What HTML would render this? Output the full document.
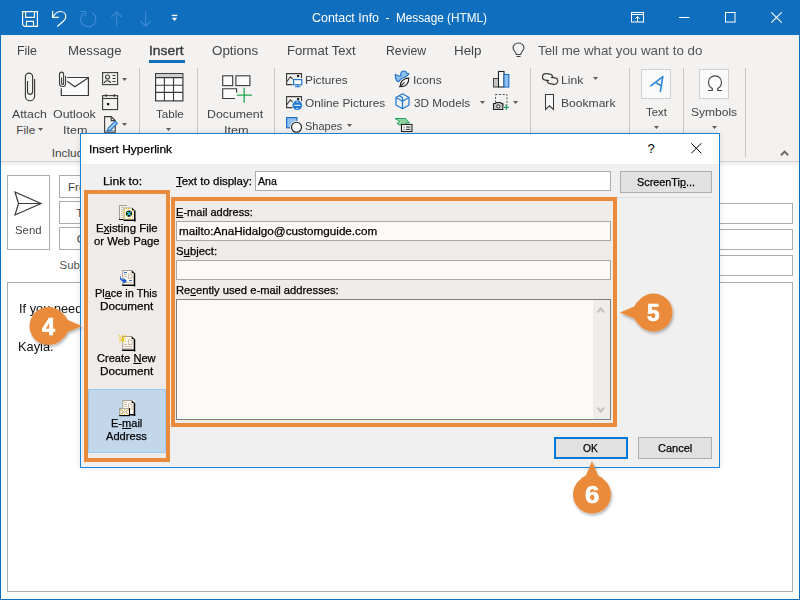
<!DOCTYPE html>
<html><head><meta charset="utf-8"><style>
html,body{margin:0;padding:0;width:800px;height:600px;overflow:hidden;background:#fff;}
body{position:relative;font-family:"Liberation Sans", sans-serif;}
.t{position:absolute;white-space:pre;line-height:normal;}
.k{-webkit-text-stroke:0.25px #000;}
u{text-decoration:underline;text-underline-offset:1px;}
</style></head><body>
<div style="position:absolute;left:0px;top:0px;width:800px;height:600px;box-sizing:border-box;background:#fff;"></div>
<div style="position:absolute;left:0px;top:0px;width:800px;height:35px;box-sizing:border-box;background:#106ebe;"></div>
<div style="position:absolute;left:1px;top:35px;width:798px;height:126px;box-sizing:border-box;background:#f3f2f1;"></div>
<div style="position:absolute;left:1px;top:161px;width:798px;height:1px;box-sizing:border-box;background:#d6d4d2;"></div>
<div style="position:absolute;left:1px;top:162px;width:798px;height:5px;background:linear-gradient(#ecebea,#fff);"></div>
<div style="position:absolute;left:0px;top:0px;width:1px;height:600px;box-sizing:border-box;background:#106ebe;"></div>
<div style="position:absolute;left:799px;top:0px;width:1px;height:600px;box-sizing:border-box;background:#106ebe;"></div>
<div style="position:absolute;left:0px;top:599px;width:800px;height:1px;box-sizing:border-box;background:#106ebe;"></div>
<svg style="position:absolute;left:22px;top:11px;overflow:visible;" width="16" height="16" viewBox="0 0 16 16"><g fill="none" stroke="#fff" stroke-width="1.15"><path d="M0.6,0.6H15.4V15.4H2.4L0.6,13.6Z"/><path d="M3.6,0.6V6.3H12.4V0.6"/><path d="M4.5,15.4V10.4H11.5V15.4"/></g></svg>
<svg style="position:absolute;left:51px;top:10px;overflow:visible;" width="16" height="18" viewBox="0 0 16 18"><g fill="none" stroke="#fff" stroke-width="1.2"><path d="M1.6,1.1V7.3H7.8"/><path d="M1.8,7C4,3.5 6.5,1.5 9.5,1.5C12.5,1.5 14.8,3.5 14.8,6.5C14.8,8.5 13.8,9.8 12.5,11L6.3,16.5"/></g></svg>
<svg style="position:absolute;left:76px;top:8px;overflow:visible;" width="24" height="22" viewBox="0 0 24 22"><g fill="none" stroke="#3f8ad6" stroke-width="1.2"><path d="M16.3,4.8A7.6,7.6 0 1 1 7.6,5.2"/><path d="M4,3.5H9.5V8.6"/></g></svg>
<svg style="position:absolute;left:111px;top:11px;overflow:visible;" width="12" height="16" viewBox="0 0 12 16"><g fill="none" stroke="#3f8ad6" stroke-width="1.1"><path d="M5.6,0.5V15.8"/><path d="M0.4,6L5.6,0.8L10.8,6"/></g></svg>
<svg style="position:absolute;left:140px;top:11px;overflow:visible;" width="12" height="16" viewBox="0 0 12 16"><g fill="none" stroke="#3f8ad6" stroke-width="1.1"><path d="M5.6,0V15.2"/><path d="M0.4,10L5.6,15.2L10.8,10"/></g></svg>
<svg style="position:absolute;left:171px;top:14px;overflow:visible;" width="8" height="8" viewBox="0 0 8 8"><rect x="0.8" y="0.8" width="5.4" height="1.3" fill="#fff"/><path d="M0.8,3.8H6.2L3.5,7Z" fill="#fff"/></svg>
<div class="t" style="left:312.41px;top:11.00px;font-size:12.6px;color:#fff;font-weight:normal;transform:scaleX(0.9865);transform-origin:0 0;">Contact Info</div>
<div style="position:absolute;left:385.6px;top:18px;width:3.7px;height:1.1px;box-sizing:border-box;background:#fff;"></div>
<div class="t" style="left:395.82px;top:11.00px;font-size:12.6px;color:#fff;font-weight:normal;transform:scaleX(0.9346);transform-origin:0 0;">Message (HTML)</div>
<svg style="position:absolute;left:630px;top:11px;overflow:visible;" width="15" height="12" viewBox="0 0 15 12"><g fill="none" stroke="#fff" stroke-width="1"><rect x="1.5" y="1.5" width="12" height="9.5"/><path d="M1.5,3.5H13.5"/><path d="M7.5,11V5.5M5.3,7.7L7.5,5.5L9.7,7.7"/></g></svg>
<svg style="position:absolute;left:679px;top:16px;overflow:visible;" width="11" height="3" viewBox="0 0 11 3"><path d="M0,1.5H10.5" stroke="#fff" stroke-width="1"/></svg>
<svg style="position:absolute;left:725px;top:12px;overflow:visible;" width="11" height="11" viewBox="0 0 11 11"><rect x="0.5" y="0.5" width="9.5" height="9.5" fill="none" stroke="#fff" stroke-width="1"/></svg>
<svg style="position:absolute;left:771px;top:12px;overflow:visible;" width="11" height="11" viewBox="0 0 11 11"><path d="M0.3,0.3L10.7,10.7M10.7,0.3L0.3,10.7" stroke="#fff" stroke-width="1.1"/></svg>
<div class="t" style="left:17.39px;top:44.00px;font-size:12.3px;color:#444444;font-weight:normal;transform:scaleX(1.0055);transform-origin:0 0;">File</div>
<div class="t" style="left:68.43px;top:44.00px;font-size:12.3px;color:#444444;font-weight:normal;transform:scaleX(1.0723);transform-origin:0 0;">Message</div>
<div class="t" style="left:148.67px;top:44.00px;font-size:12.4px;color:#3a3a3a;font-weight:normal;transform:scaleX(1.1174);transform-origin:0 0;-webkit-text-stroke:0.35px #3a3a3a;">Insert</div>
<div style="position:absolute;left:149px;top:60px;width:36px;height:3px;box-sizing:border-box;background:#106ebe;"></div>
<div class="t" style="left:211.85px;top:44.00px;font-size:12.3px;color:#444444;font-weight:normal;transform:scaleX(1.0894);transform-origin:0 0;">Options</div>
<div class="t" style="left:287.24px;top:44.00px;font-size:12.3px;color:#444444;font-weight:normal;transform:scaleX(1.0597);transform-origin:0 0;">Format Text</div>
<div class="t" style="left:386.30px;top:44.00px;font-size:12.3px;color:#444444;font-weight:normal;transform:scaleX(0.9975);transform-origin:0 0;">Review</div>
<div class="t" style="left:454.42px;top:44.00px;font-size:12.3px;color:#444444;font-weight:normal;transform:scaleX(1.0840);transform-origin:0 0;">Help</div>
<svg style="position:absolute;left:512px;top:43px;overflow:visible;" width="14" height="16" viewBox="0 0 14 16"><g fill="none" stroke="#444444" stroke-width="1.1"><path d="M4.3,11.5C4.3,9 1,7.5 1,5A5.5,5 0 0 1 12,5C12,7.5 8.7,9 8.7,11.5Z"/><path d="M4.5,13.5H8.5"/></g></svg>
<div class="t" style="left:538.18px;top:44.00px;font-size:12.4px;color:#555;font-weight:normal;transform:scaleX(1.0749);transform-origin:0 0;">Tell me what you want to do</div>
<div style="position:absolute;left:139px;top:68px;width:1px;height:89px;box-sizing:border-box;background:#c8c6c4;"></div>
<div style="position:absolute;left:197px;top:68px;width:1px;height:89px;box-sizing:border-box;background:#c8c6c4;"></div>
<div style="position:absolute;left:274px;top:68px;width:1px;height:89px;box-sizing:border-box;background:#c8c6c4;"></div>
<div style="position:absolute;left:530px;top:68px;width:1px;height:89px;box-sizing:border-box;background:#c8c6c4;"></div>
<div style="position:absolute;left:629px;top:68px;width:1px;height:89px;box-sizing:border-box;background:#c8c6c4;"></div>
<div style="position:absolute;left:683px;top:68px;width:1px;height:89px;box-sizing:border-box;background:#c8c6c4;"></div>
<div style="position:absolute;left:745px;top:68px;width:1px;height:89px;box-sizing:border-box;background:#c8c6c4;"></div>
<svg style="position:absolute;left:20px;top:68px;overflow:visible;" width="20" height="36" viewBox="0 0 20 36"><path d="M7.5,13V23.8A2.55,2.55 0 0 0 12.6,23.8V8.7A3.6,3.6 0 0 0 5.4,8.7V28.2A4.6,4.6 0 0 0 14.6,28.2V11.1" fill="none" stroke="#3b3a39" stroke-width="1.15"/></svg>

<div class="t" style="left:12.40px;top:107.00px;font-size:11.8px;color:#444444;font-weight:normal;transform:scaleX(1.0428);transform-origin:0 0;">Attach</div>
<div class="t" style="left:16.30px;top:123.00px;font-size:11.8px;color:#444444;font-weight:normal;transform:scaleX(1.0000);transform-origin:0 0;">File</div>
<svg style="position:absolute;left:38px;top:128px;overflow:visible;" width="6" height="4" viewBox="0 0 6 4"><path d="M0,0H5L2.5,3Z" fill="#605e5c"/></svg>
<svg style="position:absolute;left:56px;top:68px;overflow:visible;" width="36" height="32" viewBox="0 0 36 32"><rect x="5.3" y="9.5" width="27.1" height="18" fill="#fafafa"/><g fill="none" stroke="#3b3a39" stroke-width="1.2"><path d="M11.2,9.5H32.4V27.5H5.3V20.3"/><path d="M11.2,13.3L18.9,18.7L32,10"/><path d="M5.6,9.6V15.4A1,1 0 0 0 7.6,15.4V6.2A2.05,2.05 0 0 0 3.5,6.2V15.5A3.05,3.05 0 0 0 9.6,15.5V8" stroke-width="1.1"/></g></svg>
<div class="t" style="left:52.87px;top:107.00px;font-size:11.8px;color:#444444;font-weight:normal;transform:scaleX(1.0536);transform-origin:0 0;">Outlook</div>
<div class="t" style="left:62.58px;top:123.00px;font-size:11.8px;color:#444444;font-weight:normal;transform:scaleX(1.0664);transform-origin:0 0;">Item</div>
<svg style="position:absolute;left:102px;top:72px;overflow:visible;" width="17" height="14" viewBox="0 0 17 14"><g fill="none" stroke="#3b3a39" stroke-width="1.1"><rect x="0.6" y="0.6" width="15" height="12"/><circle cx="5.5" cy="5" r="2"/><path d="M2.3,11C2.8,8 8.2,8 8.7,11"/><path d="M10.5,3.5H13.5M10.5,6.5H13.5M10.5,9.5H13.5"/></g></svg>
<svg style="position:absolute;left:122px;top:78px;overflow:visible;" width="6" height="4" viewBox="0 0 6 4"><path d="M0,0H5L2.5,3Z" fill="#605e5c"/></svg>
<svg style="position:absolute;left:102px;top:94px;overflow:visible;" width="17" height="17" viewBox="0 0 17 17"><g fill="none" stroke="#3b3a39" stroke-width="1.1"><rect x="0.6" y="1.6" width="15" height="14"/><path d="M0.6,4.5H15.6"/><path d="M4,0V3M12.3,0V3"/></g><rect x="5" y="9" width="2.2" height="2.2" fill="#111"/></svg>
<svg style="position:absolute;left:103px;top:116px;overflow:visible;" width="17" height="17" viewBox="0 0 17 17"><g fill="none" stroke="#3b3a39" stroke-width="1.1"><path d="M1.6,0.6H8.2L12.2,4.6V16.2H1.6Z"/><path d="M8.2,0.6V4.6H12.2"/></g><path d="M5.2,12.2L12.2,5.2L14.3,7.3L7.3,14.3L4.6,14.9Z" fill="#a9d0f5" stroke="#1f6fc0" stroke-width="1.1" stroke-linejoin="round"/><path d="M3,14.8H10.5" stroke="#2b79c8" stroke-width="1"/></svg>
<svg style="position:absolute;left:122px;top:123px;overflow:visible;" width="6" height="4" viewBox="0 0 6 4"><path d="M0,0H5L2.5,3Z" fill="#605e5c"/></svg>
<div class="t" style="left:51.75px;top:146.00px;font-size:11.8px;color:#444444;font-weight:normal;">Include</div>
<svg style="position:absolute;left:152px;top:70px;overflow:visible;" width="36" height="34" viewBox="0 0 36 34"><rect x="3.6" y="3.6" width="27.3" height="27.3" fill="#fdfdfd" stroke="#3b3a39" stroke-width="1.2"/><rect x="4.2" y="4.2" width="26.1" height="3.4" fill="#cfcdcb"/><g stroke="#3b3a39" stroke-width="1.1"><path d="M3.6,7.6H30.9M3.6,15.3H30.9M3.6,22.4H30.9M12.4,7.6V30.9M21.5,7.6V30.9"/></g></svg>
<div class="t" style="left:155.70px;top:107.00px;font-size:11.8px;color:#444444;font-weight:normal;transform:scaleX(0.9854);transform-origin:0 0;">Table</div>
<svg style="position:absolute;left:166px;top:128px;overflow:visible;" width="6" height="4" viewBox="0 0 6 4"><path d="M0,0H5L2.5,3Z" fill="#605e5c"/></svg>
<svg style="position:absolute;left:218px;top:70px;overflow:visible;" width="38" height="36" viewBox="0 0 38 36"><g fill="#fafafa" stroke="#3b3a39" stroke-width="1.1"><rect x="4.7" y="5.8" width="10" height="9.8"/><rect x="17.9" y="5.8" width="14" height="9.8"/><path d="M18.6,22.8V18.8H4.7V28.5H17.1"/></g><path d="M26.2,17.7V32.7M18.9,25.2H33.9" stroke="#22a34d" stroke-width="1.3"/></svg>
<div class="t" style="left:207.46px;top:107.00px;font-size:11.8px;color:#444444;font-weight:normal;transform:scaleX(1.0436);transform-origin:0 0;">Document</div>
<div class="t" style="left:223.52px;top:123.00px;font-size:11.8px;color:#444444;font-weight:normal;transform:scaleX(1.0758);transform-origin:0 0;">Item</div>
<svg style="position:absolute;left:283px;top:70px;overflow:visible;" width="22" height="20" viewBox="0 0 22 20"><g fill="none" stroke="#3b3a39" stroke-width="1.1"><path d="M18.5,8V3.6H3.6V14.6H9.5"/><path d="M4,11.5L7.3,6.8L9.6,9"/></g><rect x="14" y="5" width="2.2" height="2.2" fill="#222"/><rect x="10.6" y="9.6" width="8.2" height="5.2" fill="#fff" stroke="#1f78d1" stroke-width="1.2"/><path d="M14.7,14.8V16.6M12,16.8H17.4" stroke="#1f78d1" stroke-width="1.1"/></svg>
<div class="t" style="left:304.60px;top:73.00px;font-size:11.8px;color:#444444;font-weight:normal;transform:scaleX(1.0024);transform-origin:0 0;">Pictures</div>
<svg style="position:absolute;left:283px;top:93px;overflow:visible;" width="22" height="20" viewBox="0 0 22 20"><g fill="none" stroke="#3b3a39" stroke-width="1.1"><path d="M18.5,8V3.6H3.6V14.6H9.5"/><path d="M4,11.5L7.3,6.8L9.6,9"/></g><rect x="14" y="5" width="2.2" height="2.2" fill="#222"/><circle cx="14.3" cy="12.3" r="4.8" fill="#1f78d1"/><path d="M11.2,12.3H17.4" stroke="#fff" stroke-width="1"/><path d="M13.3,9.6L14.3,8.6L15.3,9.6M13.3,15L14.3,16L15.3,15" fill="none" stroke="#fff" stroke-width="0.9"/></svg>
<div class="t" style="left:305.00px;top:96.00px;font-size:11.8px;color:#444444;font-weight:normal;transform:scaleX(1.0025);transform-origin:0 0;">Online Pictures</div>
<svg style="position:absolute;left:285px;top:116px;overflow:visible;" width="18" height="18" viewBox="0 0 18 18"><rect x="1.6" y="1.6" width="10.2" height="10.2" fill="#8fc0ef" stroke="#1f6fc0" stroke-width="1.2"/><circle cx="11.5" cy="11.2" r="6.4" fill="#f3f2f1"/><circle cx="11.5" cy="11.2" r="5" fill="#fafafa" stroke="#222" stroke-width="1.15"/></svg>
<div class="t" style="left:305.04px;top:119.00px;font-size:11.8px;color:#444444;font-weight:normal;transform:scaleX(0.9308);transform-origin:0 0;">Shapes</div>
<svg style="position:absolute;left:347px;top:124px;overflow:visible;" width="6" height="4" viewBox="0 0 6 4"><path d="M0,0H5L2.5,3Z" fill="#605e5c"/></svg>
<svg style="position:absolute;left:392px;top:68px;overflow:visible;" width="22" height="22" viewBox="0 0 22 22"><path d="M3.3,6.4C4.5,7.6 6.3,8.1 8.8,7.9C8.3,5 9.6,3 11.6,3C13,3 14.3,3.9 15,5.2L16.9,5.6L15.5,7.4C14.6,8.5 13.5,9.1 12.3,9.3C9.5,10.2 7.8,12 6.6,13.6C4.3,13 3.2,10.8 3.3,6.4Z" fill="#8fc0ef" stroke="#1f6fc0" stroke-width="1.1" stroke-linejoin="round"/><path d="M8.2,18.3C8,13.8 11.2,10.2 16.8,10.1C17,15.5 13.8,18.6 9.5,18.6Z" fill="#f7f7f7" stroke="#222" stroke-width="1.1"/><path d="M7.2,19.2L12.5,14.3" stroke="#222" stroke-width="1.1"/></svg>
<div class="t" style="left:413.28px;top:73.00px;font-size:11.8px;color:#444444;font-weight:normal;transform:scaleX(1.0187);transform-origin:0 0;">Icons</div>
<svg style="position:absolute;left:394px;top:92px;overflow:visible;" width="17" height="19" viewBox="0 0 17 19"><g fill="none" stroke="#1f78d1" stroke-width="1.25" stroke-linejoin="round"><path d="M8.5,1.8L15,5.5V13L8.5,16.8L2,13V5.5Z"/><path d="M2,5.5L8.5,9.2L15,5.5M8.5,9.2V16.8M5.2,3.7L8.5,5.6V9"/></g></svg>
<div class="t" style="left:413.90px;top:96.00px;font-size:11.8px;color:#444444;font-weight:normal;transform:scaleX(0.9964);transform-origin:0 0;">3D Models</div>
<svg style="position:absolute;left:480px;top:101px;overflow:visible;" width="6" height="4" viewBox="0 0 6 4"><path d="M0,0H5L2.5,3Z" fill="#605e5c"/></svg>
<svg style="position:absolute;left:394px;top:116px;overflow:visible;" width="19" height="17" viewBox="0 0 19 17"><path d="M1,2.5H11.5L15.5,7H12V9H5.5L3,7.5L5.8,5.5Z" fill="#8fd19e" stroke="#21a366" stroke-width="1"/><rect x="7.5" y="8.5" width="10.5" height="7" fill="#fff" stroke="#222" stroke-width="1.1"/><path d="M9.5,11H10.5M12,11H16.5M9.5,13.3H10.5M12,13.3H16.5" stroke="#222" stroke-width="1"/></svg>
<svg style="position:absolute;left:492px;top:70px;overflow:visible;" width="19" height="19" viewBox="0 0 19 19"><rect x="1.5" y="8.5" width="5" height="8.5" fill="#c8c6c4" stroke="#444" stroke-width="1"/><rect x="6.5" y="1.5" width="5.5" height="15.5" fill="#fff" stroke="#222" stroke-width="1.1"/><rect x="12" y="4.5" width="4.8" height="12.5" fill="#8fc0ef" stroke="#1f6fc0" stroke-width="1.1"/></svg>
<svg style="position:absolute;left:492px;top:92px;overflow:visible;" width="19" height="20" viewBox="0 0 19 20"><rect x="3.5" y="2.5" width="11.5" height="10.5" fill="none" stroke="#555" stroke-width="1" stroke-dasharray="2,1.6"/><path d="M1.5,11.5H3.5L4.5,10.5H8.5L9.5,11.5H10.8V17.5H1.5Z" fill="#c8c6c4" stroke="#222" stroke-width="1.1"/><circle cx="6.2" cy="14.4" r="1.6" fill="#fff" stroke="#222" stroke-width="1"/><path d="M14.4,12.8V18M11.8,15.4H17" stroke="#21a366" stroke-width="1.3"/></svg>
<svg style="position:absolute;left:513px;top:101px;overflow:visible;" width="6" height="4" viewBox="0 0 6 4"><path d="M0,0H5.2L2.6,3Z" fill="#605e5c"/></svg>
<svg style="position:absolute;left:540px;top:72px;overflow:visible;" width="20" height="14" viewBox="0 0 20 14"><g fill="none" stroke="#3b3a39" stroke-width="1.2" transform="rotate(8 10 7)"><path d="M9.3,8.7H5.45A3.25,3.25 0 0 1 5.45,2.2H9.25A3.25,3.25 0 0 1 12.5,5.45"/><path d="M10.7,5.2H14.65A3.25,3.25 0 0 1 14.65,11.7H10.45A3.25,3.25 0 0 1 7.2,8.45"/></g></svg>
<div class="t" style="left:560.57px;top:73.00px;font-size:11.8px;color:#444444;font-weight:normal;transform:scaleX(1.0291);transform-origin:0 0;">Link</div>
<svg style="position:absolute;left:593px;top:77px;overflow:visible;" width="6" height="4" viewBox="0 0 6 4"><path d="M0,0H5L2.5,3Z" fill="#605e5c"/></svg>
<svg style="position:absolute;left:544px;top:93px;overflow:visible;" width="12" height="18" viewBox="0 0 12 18"><path d="M1.5,1.5H9.5V16.5L5.5,12.8L1.5,16.5Z" fill="#f7f7f7" stroke="#3b3a39" stroke-width="1.05"/></svg>
<div class="t" style="left:560.58px;top:96.00px;font-size:11.8px;color:#444444;font-weight:normal;transform:scaleX(1.0250);transform-origin:0 0;">Bookmark</div>
<div style="position:absolute;left:641px;top:69px;width:30px;height:30px;box-sizing:border-box;background:#fafafa;border:1px solid #d2d0ce;"></div>
<svg style="position:absolute;left:646px;top:72px;overflow:visible;" width="22" height="22" viewBox="0 0 22 22"><path d="M4.8,13.8L16.8,4.6L14.4,19.4M9.6,10.6L15.4,13.8" fill="none" stroke="#2e86d9" stroke-width="1.6" stroke-linecap="round" stroke-linejoin="round"/></svg>
<div class="t" style="left:645.96px;top:105.00px;font-size:11.8px;color:#444444;font-weight:normal;transform:scaleX(0.9695);transform-origin:0 0;">Text</div>
<svg style="position:absolute;left:654px;top:126px;overflow:visible;" width="6" height="4" viewBox="0 0 6 4"><path d="M0,0H5L2.5,3Z" fill="#605e5c"/></svg>
<div style="position:absolute;left:699px;top:69px;width:30px;height:30px;box-sizing:border-box;background:#fafafa;border:1px solid #d2d0ce;"></div>
<svg style="position:absolute;left:706px;top:74px;overflow:visible;" width="18" height="18" viewBox="0 0 18 18"><path d="M2,16.5H6.3V14.6C3.8,13.3 2.5,11 2.5,8.3C2.5,4.6 5.3,1.9 9,1.9C12.7,1.9 15.5,4.6 15.5,8.3C15.5,11 14.2,13.3 11.7,14.6V16.5H16" fill="none" stroke="#444" stroke-width="1.15"/></svg>
<div class="t" style="left:691.39px;top:105.00px;font-size:11.8px;color:#444444;font-weight:normal;transform:scaleX(1.0181);transform-origin:0 0;">Symbols</div>
<svg style="position:absolute;left:712px;top:126px;overflow:visible;" width="6" height="4" viewBox="0 0 6 4"><path d="M0,0H5L2.5,3Z" fill="#605e5c"/></svg>
<svg style="position:absolute;left:780px;top:149px;overflow:visible;" width="10" height="8" viewBox="0 0 10 8"><path d="M1,6.2L4.6,2.6L8.2,6.2" fill="none" stroke="#6a6866" stroke-width="2"/></svg>
<div style="position:absolute;left:7px;top:175px;width:43px;height:75px;box-sizing:border-box;border:1px solid #ababab;background:#fff;"></div>
<svg style="position:absolute;left:14px;top:191px;overflow:visible;" width="29" height="25" viewBox="0 0 29 25"><path d="M1,1L27,12.5L1,24L4.5,12.5Z M4.5,12.5H27" fill="none" stroke="#3b3a39" stroke-width="1.2" stroke-linejoin="miter"/></svg>
<div class="t" style="left:14.90px;top:224.00px;font-size:11.4px;color:#444444;font-weight:normal;transform:scaleX(0.9961);transform-origin:0 0;">Send</div>
<div style="position:absolute;left:59px;top:175px;width:60px;height:23px;box-sizing:border-box;border:1px solid #ababab;background:#fff;"></div>
<div style="position:absolute;left:59px;top:201px;width:60px;height:23px;box-sizing:border-box;border:1px solid #ababab;background:#fff;"></div>
<div style="position:absolute;left:59px;top:227px;width:60px;height:23px;box-sizing:border-box;border:1px solid #ababab;background:#fff;"></div>
<div class="t" style="left:68.00px;top:180.00px;font-size:11.6px;color:#444;font-weight:normal;">From</div>
<div class="t" style="left:76.30px;top:206.00px;font-size:11.6px;color:#444;font-weight:normal;">To</div>
<div class="t" style="left:76.70px;top:232.00px;font-size:11.6px;color:#444;font-weight:normal;">Cc</div>
<div style="position:absolute;left:125px;top:203px;width:668px;height:21px;box-sizing:border-box;border:1px solid #ababab;background:#fff;"></div>
<div style="position:absolute;left:125px;top:229px;width:668px;height:21px;box-sizing:border-box;border:1px solid #ababab;background:#fff;"></div>
<div style="position:absolute;left:125px;top:255px;width:668px;height:21px;box-sizing:border-box;border:1px solid #ababab;background:#fff;"></div>
<div class="t" style="left:59.60px;top:259.00px;font-size:11.4px;color:#555;font-weight:normal;">Subject</div>
<div style="position:absolute;left:7px;top:282px;width:786px;height:310px;box-sizing:border-box;border:1px solid #ababab;background:#fff;"></div>
<div class="t" style="left:18.90px;top:302.00px;font-size:11.9px;color:#111;font-weight:normal;transform:scaleX(1.077);transform-origin:0 0;">If you need any more information</div>
<div class="t" style="left:17.82px;top:340.00px;font-size:11.9px;color:#111;font-weight:normal;transform:scaleX(1.0774);transform-origin:0 0;">Kayla.</div>
<div style="position:absolute;left:80px;top:133px;width:640px;height:335px;box-shadow:0 0 6px rgba(0,0,0,0.12);"></div>
<div style="position:absolute;left:80px;top:133px;width:640px;height:335px;box-sizing:border-box;border:1px solid #1883d7;background:#f0f0f0;"></div>
<div style="position:absolute;left:81px;top:134px;width:638px;height:30px;box-sizing:border-box;background:#fff;"></div>
<div class="t k" style="left:88.87px;top:142.00px;font-size:11.6px;color:#000;font-weight:normal;transform:scaleX(1.0314);transform-origin:0 0;">Insert Hyperlink</div>
<div class="t" style="left:451.00px;width:400px;text-align:center;top:141.00px;font-size:13px;color:#000;font-weight:normal;">?</div>
<svg style="position:absolute;left:691px;top:143px;overflow:visible;" width="11" height="11" viewBox="0 0 11 11"><path d="M0.3,0.3L10.3,10.3M10.3,0.3L0.3,10.3" stroke="#000" stroke-width="1"/></svg>
<div class="t k" style="left:102.53px;top:175.00px;font-size:11.2px;color:#000;font-weight:normal;transform:scaleX(1.0819);transform-origin:0 0;">Link to:</div>
<div class="t k" style="left:176.00px;top:175.00px;font-size:11.2px;color:#000;font-weight:normal;transform:scaleX(1.0260);transform-origin:0 0;"><u>T</u>ext to display:</div>
<div style="position:absolute;left:255px;top:171px;width:356px;height:20px;box-sizing:border-box;border:1px solid #adadad;background:#fff;"></div>
<div class="t k" style="left:258.41px;top:175.00px;font-size:11.2px;color:#000;font-weight:normal;transform:scaleX(0.9444);transform-origin:0 0;">Ana</div>
<div style="position:absolute;left:620px;top:171px;width:92px;height:22px;box-sizing:border-box;border:1px solid #adadad;background:#e1e1e1;"></div>
<div class="t k" style="left:637.02px;top:176.00px;font-size:11.2px;color:#000;font-weight:normal;transform:scaleX(0.9675);transform-origin:0 0;">ScreenTi<u>p</u>...</div>
<div style="position:absolute;left:175px;top:197px;width:538px;height:1px;box-sizing:border-box;background:#dcdcdc;"></div>
<div style="position:absolute;left:84px;top:190px;width:86px;height:272px;box-sizing:border-box;border:4px solid #e98b3a;background:#efebe8;"></div>
<div style="position:absolute;left:88px;top:389px;width:78px;height:64px;box-sizing:border-box;border:1px solid #99c9f5;background:#c3d7eb;"></div>
<svg style="position:absolute;left:112px;top:200px;overflow:visible;" width="30" height="24" viewBox="0 0 30 24"><rect x="7" y="5" width="9" height="14.5" fill="#f7f3ec"/><rect x="7" y="5" width="8" height="1" fill="#a59f96"/><rect x="7" y="5" width="1" height="14.5" fill="#a59f96"/><rect x="7" y="19" width="5" height="1" fill="#000"/><rect x="9" y="7" width="2" height="1" fill="#cfc3b0"/><rect x="9" y="9" width="2" height="1" fill="#cfc3b0"/><rect x="9" y="11" width="2" height="1" fill="#cfc3b0"/><rect x="9" y="13" width="2" height="1" fill="#cfc3b0"/><rect x="9" y="15" width="2" height="1" fill="#cfc3b0"/><rect x="9" y="17" width="2" height="1" fill="#cfc3b0"/><rect x="11.5" y="7.5" width="11.5" height="13" fill="#fcf8f2"/><rect x="11.5" y="7.5" width="8.5" height="1" fill="#a59f96"/><rect x="11.5" y="7.5" width="1" height="13" fill="#a59f96"/><rect x="22.0" y="10.5" width="1.5" height="11" fill="#000"/><rect x="11.5" y="19.5" width="12.0" height="1.5" fill="#000"/><path d="M20.0,7.5 L23.0,10.5 H20.0 Z" fill="#111"/><circle cx="12.5" cy="8.6" r="0.55" fill="#f5c400"/><circle cx="14.5" cy="8.6" r="0.55" fill="#f5c400"/><circle cx="16.5" cy="8.6" r="0.55" fill="#f5c400"/><circle cx="18.5" cy="8.6" r="0.55" fill="#f5c400"/><circle cx="12.5" cy="18.8" r="0.55" fill="#f5c400"/><circle cx="14.5" cy="18.8" r="0.55" fill="#f5c400"/><circle cx="16.5" cy="18.8" r="0.55" fill="#f5c400"/><circle cx="18.5" cy="18.8" r="0.55" fill="#f5c400"/><circle cx="20.5" cy="18.8" r="0.55" fill="#f5c400"/><circle cx="12.5" cy="10.6" r="0.55" fill="#f5c400"/><circle cx="20.5" cy="10.6" r="0.55" fill="#f5c400"/><circle cx="12.5" cy="12.6" r="0.55" fill="#f5c400"/><circle cx="20.5" cy="12.6" r="0.55" fill="#f5c400"/><circle cx="12.5" cy="14.6" r="0.55" fill="#f5c400"/><circle cx="20.5" cy="14.6" r="0.55" fill="#f5c400"/><circle cx="12.5" cy="16.6" r="0.55" fill="#f5c400"/><circle cx="20.5" cy="16.6" r="0.55" fill="#f5c400"/><circle cx="17" cy="13.6" r="3.1" fill="#050505"/><path d="M15,12L19,15.5M19,11.6L15.3,15.3" stroke="#29d0e8" stroke-width="1.1"/><circle cx="16.4" cy="12.2" r="0.7" fill="#22c33a"/><circle cx="15.4" cy="15.4" r="0.7" fill="#22c33a"/></svg>
<svg style="position:absolute;left:112px;top:265px;overflow:visible;" width="30" height="24" viewBox="0 0 30 24"><rect x="10.2" y="5" width="12.5" height="15.5" fill="#fcf8f2"/><rect x="10.2" y="5" width="9.5" height="1" fill="#a59f96"/><rect x="10.2" y="5" width="1" height="15.5" fill="#a59f96"/><rect x="21.7" y="8" width="1.5" height="13.5" fill="#000"/><rect x="10.2" y="19.5" width="13.0" height="1.5" fill="#000"/><path d="M19.7,5 L22.7,8 H19.7 Z" fill="#111"/><rect x="12" y="7" width="3" height="1" fill="#2f6fe0"/><rect x="12" y="9" width="3" height="1" fill="#cdbfa8"/><rect x="12" y="11" width="3" height="1" fill="#cdbfa8"/><rect x="16.5" y="9" width="3.5" height="4.5" fill="none" stroke="#cdbfa8" stroke-width="1"/><rect x="17" y="15" width="3" height="1" fill="#2f6fe0"/><rect x="13" y="17" width="7" height="1" fill="#cdbfa8"/><path d="M9.5,9 C8,9.5 8,12.5 10,14 L11.5,15 L11.5,13 L15,16 L11.5,19 L11.5,17 L9,15.3 C7.5,14 7.5,10.5 9.5,9 Z" fill="#1757d0"/></svg>
<svg style="position:absolute;left:112px;top:330px;overflow:visible;" width="30" height="24" viewBox="0 0 30 24"><rect x="10.2" y="6" width="12.5" height="14.5" fill="#fcf8f2"/><rect x="10.2" y="6" width="9.5" height="1" fill="#a59f96"/><rect x="10.2" y="6" width="1" height="14.5" fill="#a59f96"/><rect x="21.7" y="9" width="1.5" height="12.5" fill="#000"/><rect x="10.2" y="19.5" width="13.0" height="1.5" fill="#000"/><path d="M19.7,6 L22.7,9 H19.7 Z" fill="#111"/><rect x="16.5" y="10" width="3.5" height="4.5" fill="none" stroke="#cdbfa8" stroke-width="1"/><rect x="12" y="14" width="3" height="1" fill="#cdbfa8"/><rect x="12" y="16" width="8" height="1" fill="#cdbfa8"/><rect x="12" y="18" width="8" height="1" fill="#cdbfa8"/><path d="M10.5,5V13M7,5.5L14,12.5M14,5.5L7,12.5M6.8,9H14.5" stroke="#f2c400" stroke-width="1.1" stroke-dasharray="1.2,0.8"/></svg>
<svg style="position:absolute;left:112px;top:395px;overflow:visible;" width="30" height="24" viewBox="0 0 30 24"><rect x="10.2" y="5" width="12.5" height="15" fill="#fcf8f2"/><rect x="10.2" y="5" width="9.5" height="1" fill="#a59f96"/><rect x="10.2" y="5" width="1" height="15" fill="#a59f96"/><rect x="21.7" y="8" width="1.5" height="13" fill="#000"/><rect x="10.2" y="19" width="13.0" height="1.5" fill="#000"/><path d="M19.7,5 L22.7,8 H19.7 Z" fill="#111"/><rect x="12" y="7" width="3" height="1" fill="#cdbfa8"/><rect x="12" y="9" width="3" height="1" fill="#cdbfa8"/><rect x="12" y="11" width="3" height="1" fill="#cdbfa8"/><rect x="16.5" y="9" width="3.5" height="5" fill="none" stroke="#cdbfa8" stroke-width="1"/><rect x="7.2" y="13.2" width="10.5" height="7.5" fill="#fffdf5"/><rect x="7.2" y="13.2" width="10" height="1" fill="#9a948c"/><rect x="7.2" y="13.2" width="1" height="7.5" fill="#9a948c"/><rect x="17" y="13.2" width="1" height="7.8" fill="#000"/><rect x="7.2" y="20" width="10.8" height="1.2" fill="#000"/><path d="M8,14L12.5,17.5L17,14M8,20L11,17M17,20L14,17" stroke="#9a948c" stroke-width="0.8" fill="none"/><circle cx="8.5" cy="15" r="0.6" fill="#f5c400"/><circle cx="8.5" cy="19.5" r="0.6" fill="#f5c400"/><circle cx="10.5" cy="16" r="0.6" fill="#f5c400"/><circle cx="10.5" cy="18.5" r="0.6" fill="#f5c400"/><circle cx="12.5" cy="15" r="0.6" fill="#f5c400"/><circle cx="12.5" cy="19.5" r="0.6" fill="#f5c400"/><circle cx="14.5" cy="16" r="0.6" fill="#f5c400"/><circle cx="14.5" cy="18.5" r="0.6" fill="#f5c400"/><circle cx="16.5" cy="15" r="0.6" fill="#f5c400"/><circle cx="16.5" cy="19.5" r="0.6" fill="#f5c400"/></svg>
<div class="t k" style="left:95.58px;top:222.00px;font-size:11.2px;color:#000;font-weight:normal;transform:scaleX(1.0220);transform-origin:0 0;">E<u>x</u>isting File</div>
<div class="t k" style="left:94.30px;top:235.00px;font-size:11.2px;color:#000;font-weight:normal;transform:scaleX(1.0078);transform-origin:0 0;">or Web Page</div>
<div class="t k" style="left:94.72px;top:287.00px;font-size:11.2px;color:#000;font-weight:normal;transform:scaleX(0.9744);transform-origin:0 0;">Pl<u>a</u>ce in This</div>
<div class="t k" style="left:99.76px;top:300.00px;font-size:11.2px;color:#000;font-weight:normal;transform:scaleX(1.0459);transform-origin:0 0;">Document</div>
<div class="t k" style="left:97.21px;top:352.00px;font-size:11.2px;color:#000;font-weight:normal;transform:scaleX(0.9915);transform-origin:0 0;">Create <u>N</u>ew</div>
<div class="t k" style="left:99.76px;top:365.00px;font-size:11.2px;color:#000;font-weight:normal;transform:scaleX(1.0459);transform-origin:0 0;">Document</div>
<div class="t k" style="left:110.91px;top:417.00px;font-size:11.2px;color:#000;font-weight:normal;transform:scaleX(0.9867);transform-origin:0 0;">E-<u>m</u>ail</div>
<div class="t k" style="left:106.10px;top:430.00px;font-size:11.2px;color:#000;font-weight:normal;transform:scaleX(0.9926);transform-origin:0 0;">Address</div>
<div style="position:absolute;left:171px;top:197px;width:446px;height:230px;box-sizing:border-box;border:4px solid #e98b3a;background:#efebe8;"></div>
<div class="t k" style="left:176.30px;top:206.00px;font-size:11.2px;color:#000;font-weight:normal;transform:scaleX(0.9883);transform-origin:0 0;"><u>E</u>-mail address:</div>
<div style="position:absolute;left:176px;top:221px;width:435px;height:20px;box-sizing:border-box;border:1px solid #aaa7a4;background:#fdf9f6;"></div>
<div class="t k" style="left:178.97px;top:225.00px;font-size:11.2px;color:#000;font-weight:normal;transform:scaleX(1.0440);transform-origin:0 0;">mailto:AnaHidalgo@customguide.com</div>
<div class="t k" style="left:176.19px;top:245.00px;font-size:11.2px;color:#000;font-weight:normal;transform:scaleX(1.0154);transform-origin:0 0;">S<u>u</u>bject:</div>
<div style="position:absolute;left:176px;top:260px;width:435px;height:20px;box-sizing:border-box;border:1px solid #aaa7a4;background:#fdf9f6;"></div>
<div class="t k" style="left:175.90px;top:284.00px;font-size:11.2px;color:#000;font-weight:normal;transform:scaleX(1.0025);transform-origin:0 0;">Re<u>c</u>ently used e-mail addresses:</div>
<div style="position:absolute;left:176px;top:299px;width:435px;height:121px;box-sizing:border-box;border:1px solid #7f7f80;background:#fdf9f6;"></div>
<div style="position:absolute;left:593px;top:300px;width:17px;height:119px;box-sizing:border-box;background:#f0ece9;"></div>
<svg style="position:absolute;left:596px;top:305px;overflow:visible;" width="10" height="9" viewBox="0 0 10 9"><path d="M1.5,7.3L4.7,3.5L7.9,7.3" fill="none" stroke="#c2bfbc" stroke-width="1.9"/></svg>
<svg style="position:absolute;left:596px;top:405px;overflow:visible;" width="10" height="9" viewBox="0 0 10 9"><path d="M1.5,2.7L4.7,6.5L7.9,2.7" fill="none" stroke="#c2bfbc" stroke-width="1.9"/></svg>
<div style="position:absolute;left:554px;top:437px;width:74px;height:22px;box-sizing:border-box;border:2px solid #0078d7;background:#e1e1e1;"></div>
<div class="t k" style="left:583.04px;top:442.00px;font-size:11.2px;color:#000;font-weight:normal;transform:scaleX(0.9161);transform-origin:0 0;">OK</div>
<div style="position:absolute;left:638px;top:437px;width:74px;height:22px;box-sizing:border-box;border:1px solid #adadad;background:#e1e1e1;"></div>
<div class="t k" style="left:658.01px;top:442.00px;font-size:11.2px;color:#000;font-weight:normal;transform:scaleX(0.9851);transform-origin:0 0;">Cancel</div>
<svg style="position:absolute;left:0;top:0;overflow:visible" width="800" height="600"><defs><filter id="sh4" x="-50%" y="-50%" width="200%" height="200%"><feDropShadow dx="1" dy="2" stdDeviation="1.5" flood-color="#000" flood-opacity="0.3"/></filter></defs><g filter="url(#sh4)"><circle cx="48.5" cy="326" r="19" fill="#e98b3a"/><path d="M64.70,315.00 Q67.00,319.00 67.80,320.00 L82,326 L67.80,332.00 Q67.00,333.00 64.70,337.00 L48.5,326 Z" fill="#e98b3a"/></g></svg>
<div class="t" style="left:41.75px;top:314.00px;font-size:23px;color:#fff;font-weight:bold;transform:scaleX(1.0161);transform-origin:0 0;-webkit-text-stroke:0.7px #fff;">4</div>
<svg style="position:absolute;left:0;top:0;overflow:visible" width="800" height="600"><defs><filter id="sh5" x="-50%" y="-50%" width="200%" height="200%"><feDropShadow dx="1" dy="2" stdDeviation="1.5" flood-color="#000" flood-opacity="0.3"/></filter></defs><g filter="url(#sh5)"><circle cx="653.5" cy="312.5" r="19" fill="#e98b3a"/><path d="M637.30,323.50 Q635.00,319.50 634.20,318.50 L620,312.5 L634.20,306.50 Q635.00,305.50 637.30,301.50 L653.5,312.5 Z" fill="#e98b3a"/></g></svg>
<div class="t" style="left:646.76px;top:300.00px;font-size:23px;color:#fff;font-weight:bold;transform:scaleX(0.9826);transform-origin:0 0;-webkit-text-stroke:0.7px #fff;">5</div>
<svg style="position:absolute;left:0;top:0;overflow:visible" width="800" height="600"><defs><filter id="sh6" x="-50%" y="-50%" width="200%" height="200%"><feDropShadow dx="1" dy="2" stdDeviation="1.5" flood-color="#000" flood-opacity="0.3"/></filter></defs><g filter="url(#sh6)"><circle cx="592" cy="494.5" r="19" fill="#e98b3a"/><path d="M581.00,478.30 Q585.00,476.00 586.00,475.20 L592,461 L598.00,475.20 Q599.00,476.00 603.00,478.30 L592,494.5 Z" fill="#e98b3a"/></g></svg>
<div class="t" style="left:585.20px;top:482.00px;font-size:23px;color:#fff;font-weight:bold;transform:scaleX(1.1205);transform-origin:0 0;-webkit-text-stroke:0.7px #fff;">6</div>
</body></html>
